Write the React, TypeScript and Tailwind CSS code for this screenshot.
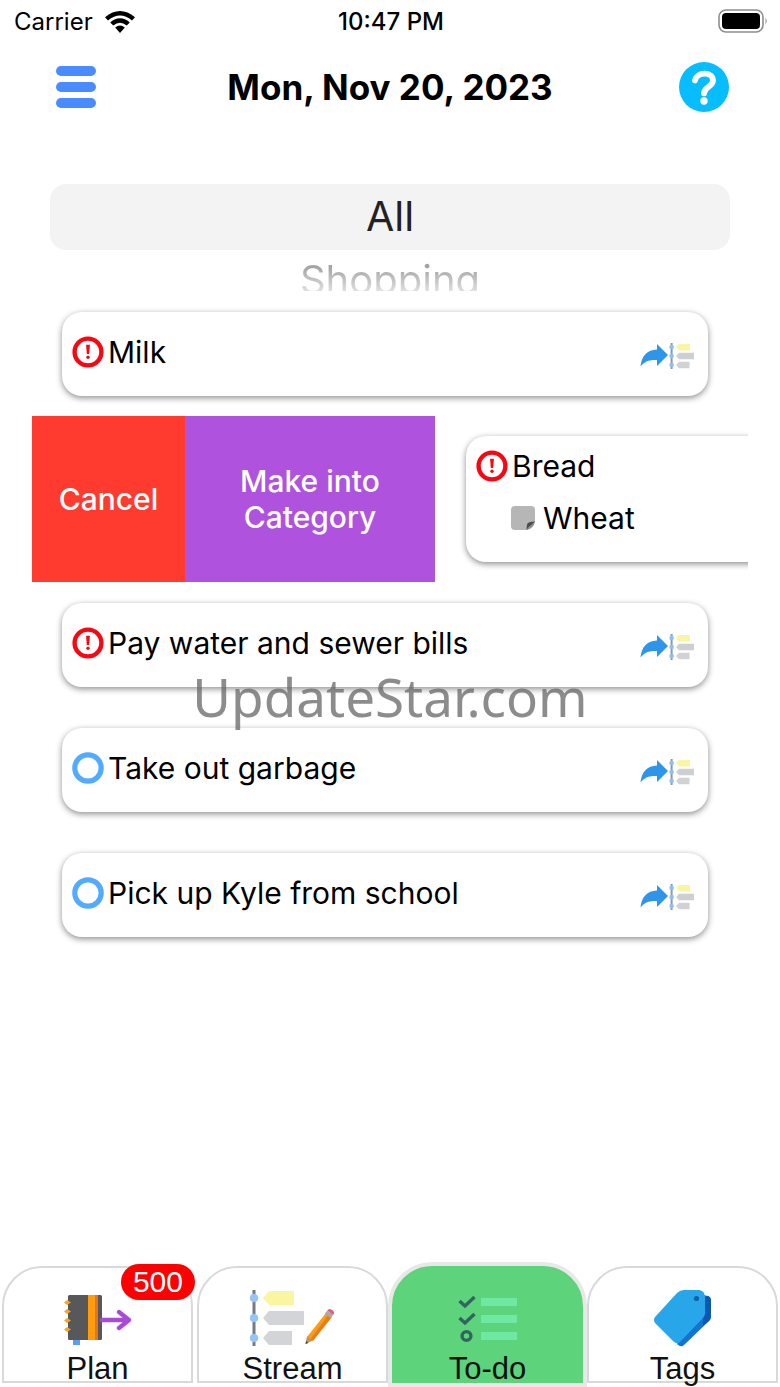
import React from 'react';

type Task = {
  title: string;
  urgent: boolean;
};

const firstTask: Task = { title: 'Milk', urgent: true };

const laterTasks: Task[] = [
  { title: 'Pay water and sewer bills', urgent: true },
  { title: 'Take out garbage', urgent: false },
  { title: 'Pick up Kyle from school', urgent: false },
];

const WifiIcon: React.FC = () => (
  <svg width="30" height="22" viewBox="0 0 30 22" aria-hidden="true">
    <path d="M0 6.2 Q15 -6.2 30 6.2 L27 9.4 Q15 -0.6 3 9.4 Z" />
    <path d="M5.2 11.4 Q15 3 24.8 11.4 L21.7 14.6 Q15 8.8 8.3 14.6 Z" />
    <path d="M10.2 16.6 Q15 12.6 19.8 16.6 L15 22 Z" />
  </svg>
);

const BatteryIcon: React.FC = () => (
  <svg width="50" height="24" viewBox="0 0 50 24" aria-hidden="true">
    <rect x="1" y="1" width="44" height="22" rx="7" fill="none" stroke="#8e8e8e" strokeWidth="1.6" />
    <rect x="4" y="4" width="38" height="16" rx="4" />
    <path d="M47.5 8.5 Q50 12 47.5 15.5 Z" fill="#9a9a9a" />
  </svg>
);

const MenuIcon: React.FC = () => (
  <svg width="40" height="44" viewBox="0 0 40 44" fill="#4a8cff" aria-hidden="true">
    <rect y="1" width="40" height="10" rx="5" />
    <rect y="17" width="40" height="10" rx="5" />
    <rect y="33" width="40" height="10" rx="5" />
  </svg>
);

const HelpIcon: React.FC = () => (
  <svg width="50" height="50" viewBox="0 0 50 50" aria-hidden="true">
    <circle cx="25" cy="25" r="25" fill="#05bdff" />
    <path
      d="M16 18.5 C17.5 9.5 34 9 34 18.6 C34 25 25 24.8 25 31.4"
      fill="none"
      stroke="#fff"
      strokeWidth="5.8"
      strokeLinecap="round"
    />
    <circle cx="25" cy="39" r="3.7" fill="#fff" />
  </svg>
);

const StatusIcon: React.FC<{ urgent: boolean }> = ({ urgent }) =>
  urgent ? (
    <svg width="32" height="32" viewBox="0 0 32 32" aria-hidden="true">
      <circle cx="16" cy="16" r="13.4" fill="none" stroke="#fa0512" strokeWidth="4.4" />
      <path d="M14.1 8.8 H17.9 L17.2 18 H14.8 Z" fill="#fa0512" />
      <circle cx="16" cy="21.2" r="1.7" fill="#fa0512" />
    </svg>
  ) : (
    <svg width="32" height="32" viewBox="0 0 32 32" aria-hidden="true">
      <circle cx="16" cy="16" r="13.2" fill="none" stroke="#52abff" strokeWidth="5.2" />
    </svg>
  );

const MoveIcon: React.FC = () => (
  <svg width="54" height="28" viewBox="0 0 54 28" aria-hidden="true">
    <path d="M17 2 L28 13 L17 24 V18 C9 17.6 4.5 19.5 0.5 24.5 C1.5 14 7 8 17 7.6 Z" fill="#2f95ea" />
    <path d="M31.6 1 V27" stroke="#8c97a8" strokeWidth="2" />
    <g fill="#8fbdf5">
      <circle cx="31.6" cy="5" r="2.3" />
      <circle cx="31.6" cy="14" r="2.3" />
      <circle cx="31.6" cy="23" r="2.3" />
    </g>
    <path d="M36 5 L39 2 H50 V8.4 H39 Z" fill="#f9f5a2" />
    <path d="M36 14 L39 10.8 H54 V17.2 H39 Z" fill="#cdd0d2" />
    <path d="M36 23 L39 19.8 H49.5 V26.2 H39 Z" fill="#d0d2d4" />
  </svg>
);

const NoteIcon: React.FC = () => (
  <svg width="24" height="24" viewBox="0 0 24 24" aria-hidden="true">
    <path d="M4 0 H20 Q24 0 24 4 V16 L16 24 H4 Q0 24 0 20 V4 Q0 0 4 0 Z" fill="#b7b6b7" />
    <path d="M24 15.4 Q17 15.6 16.2 18 Q15.6 20 15.6 24 Z" fill="#4c4b4c" />
    <path d="M24 16 Q22.5 22.5 15.6 24 L17.5 21 Z" fill="#8d8c8d" />
  </svg>
);

const PlanIcon: React.FC = () => (
  <svg width="68" height="60" viewBox="0 0 68 60" aria-hidden="true">
    <rect x="9" y="48" width="7" height="7" fill="#5b9df0" />
    <rect x="4" y="5" width="34" height="45" rx="1.5" fill="#56585a" />
    <rect x="24" y="5" width="10" height="45" fill="#ff9c0e" />
    <rect x="31" y="5" width="3" height="45" fill="#e5751b" />
    <g fill="#f8a428">
      <path d="M0 12.5 L3 10 L7 12.5 L3 15 Z" />
      <path d="M0 21.5 L3 19 L7 21.5 L3 24 Z" />
      <path d="M0 30.5 L3 28 L7 30.5 L3 33 Z" />
      <path d="M0 39.5 L3 37 L7 39.5 L3 42 Z" />
    </g>
    <path
      d="M38 30 H64 M55 22 L65 30 L55 38"
      fill="none"
      stroke="#a94bd6"
      strokeWidth="4.4"
      strokeLinecap="round"
      strokeLinejoin="round"
    />
  </svg>
);

const StreamIcon: React.FC = () => (
  <svg width="86" height="60" viewBox="2 0 86 60" aria-hidden="true">
    <path d="M6 0 V56" stroke="#777b80" strokeWidth="3" />
    <g fill="#93c5f8">
      <circle cx="6" cy="8" r="4.3" />
      <circle cx="6" cy="28" r="4.3" />
      <circle cx="6" cy="48" r="4.3" />
    </g>
    <path d="M15 8 L21 1 H46 V15 H21 Z" fill="#faf5a0" />
    <path d="M15 28 L21 21 H56 V35 H21 Z" fill="#d2d4d7" />
    <path d="M15 48 L21 41 H44 V55 H21 Z" fill="#d2d4d7" />
    <path d="M78 23 L83 27 L64 51 L59 47 Z" fill="#fb9d18" />
    <path d="M81 24 L84 27 L65 51 L62.5 49 Z" fill="#e58112" />
    <path d="M59 46 L64.5 50.5 L57.5 54 Z" fill="#c49554" />
    <path d="M58.2 51 L60.5 53 L57.5 54 Z" fill="#49433c" />
    <path d="M77 23.5 L79.3 20.5 L85 25 L82.5 28 Z" fill="#a3abad" />
    <path d="M79.3 20.5 Q81 17.5 85 20.5 Q87 23 85 25 Z" fill="#e0607b" />
  </svg>
);

const TodoIcon: React.FC = () => (
  <svg width="60" height="60" viewBox="0 0 60 60" aria-hidden="true">
    <g fill="none" stroke="#34645f" strokeWidth="3.4">
      <path d="M1.5 11 L7 16 L16.5 7" />
      <path d="M1.5 28 L7 33 L16.5 24" />
      <circle cx="8.5" cy="46" r="4.4" />
    </g>
    <g fill="#70e8a4">
      <rect x="23" y="8" width="36" height="8" />
      <rect x="23" y="25" width="36" height="8" />
      <rect x="23" y="42" width="36" height="8" />
    </g>
  </svg>
);

const TagIcon: React.FC = () => (
  <svg width="60" height="60" viewBox="0 0 60 60" aria-hidden="true">
    <path d="M46 4 L55 6 Q58 7 58 11 V26 Q58 29 56 31 L31 55 Q28 58 24 54 Z" fill="#1273d2" />
    <path d="M52 7 L55 6 Q58 7 58 11 V26 Q58 29 56 31 L50 36 L50 27 Z" fill="#0b58b4" />
    <path
      d="M24 3 Q27 0 31 0 H46 Q52 1 52 7 V23 Q52 26 50 28 L27 52 Q24 55 20 51 L2 33 Q0 30 2 27 Z"
      fill="#27a6ea"
    />
    <circle cx="43.5" cy="8.5" r="2.6" fill="#10609f" />
  </svg>
);

type Tab = {
  label: string;
  icon: React.FC;
  active?: boolean;
  badge?: string;
};

const tabs: Tab[] = [
  { label: 'Plan', icon: PlanIcon, badge: '500' },
  { label: 'Stream', icon: StreamIcon },
  { label: 'To-do', icon: TodoIcon, active: true },
  { label: 'Tags', icon: TagIcon },
];

const cardShadow = 'shadow-[0_2px_6px_rgba(0,0,0,0.45)]';

const TaskRow: React.FC<{ task: Task }> = ({ task }) => (
  <li className="pt-[21px] pb-5 pl-[30px] pr-10">
    <div className={`flex h-[84px] items-center rounded-[20px] bg-white pb-1 pl-2.5 pr-3.5 ${cardShadow}`}>
      <button type="button" aria-label={`Complete ${task.title}`} className="mr-1 shrink-0">
        <StatusIcon urgent={task.urgent} />
      </button>
      <span className="flex-1 text-[30px] leading-9">{task.title}</span>
      <button type="button" aria-label={`Move ${task.title} to stream`} className="mt-2 shrink-0">
        <MoveIcon />
      </button>
    </div>
  </li>
);

const App: React.FC = () => {
  return (
    <div className="flex min-h-screen flex-col bg-white font-['Inter','Liberation_Sans',sans-serif] text-black">
      <div className="grid h-11 grid-cols-3 items-center pl-3.5 pr-3 text-[24px]">
        <div className="flex items-center gap-3">
          <span>Carrier</span>
          <WifiIcon />
        </div>
        <span className="text-center font-medium">10:47 PM</span>
        <div className="flex justify-end pb-0.5">
          <BatteryIcon />
        </div>
      </div>

      <header className="flex h-[86px] items-center justify-between px-[51px]">
        <button type="button" aria-label="Menu" className="flex w-[50px] justify-center">
          <MenuIcon />
        </button>
        <h1 className="text-[35px] font-bold">Mon, Nov 20, 2023</h1>
        <button type="button" aria-label="Help">
          <HelpIcon />
        </button>
      </header>

      <div className="mt-[54px] flex h-[107px] flex-col overflow-hidden px-[50px]">
        <button type="button" className="h-[66px] shrink-0 rounded-2xl bg-[#f3f3f4] text-[41px] text-[#222]">
          All
        </button>
        <button
          type="button"
          className="mt-1.5 shrink-0 bg-linear-to-b from-[#8c8c8c] to-white bg-clip-text text-[40px] leading-12 text-transparent"
        >
          Shopping
        </button>
      </div>

      <main className="relative px-8">
        <ul>
          <TaskRow task={firstTask} />
          <li className="flex h-[166px] overflow-hidden">
            <button type="button" className="w-[153px] shrink-0 bg-[#ff3b30] text-[30px] font-medium text-white">
              Cancel
            </button>
            <button
              type="button"
              className="w-[250px] shrink-0 bg-[#af52de] px-10 text-[30px] leading-9 font-medium text-white"
            >
              Make into Category
            </button>
            <div className={`my-5 -mr-10 ml-[31px] flex-1 rounded-[20px] bg-white pl-2.5 pt-3 ${cardShadow}`}>
              <div className="flex items-center gap-1">
                <button type="button" aria-label="Complete Bread" className="shrink-0">
                  <StatusIcon urgent />
                </button>
                <span className="text-[30px] leading-9">Bread</span>
              </div>
              <div className="mt-4 flex items-center gap-2 pl-[35px]">
                <NoteIcon />
                <span className="text-[30px] leading-9">Wheat</span>
              </div>
            </div>
          </li>
          {laterTasks.map((task) => (
            <TaskRow key={task.title} task={task} />
          ))}
        </ul>
        <p className="pointer-events-none absolute inset-x-0 top-[370px] text-center font-['Noto_Sans','Open_Sans',sans-serif] text-[53px] leading-[72px] text-[#666]/75">
          UpdateStar.com
        </p>
      </main>

      <nav className="mt-auto grid grid-cols-4 gap-1 px-0.5 pb-1" aria-label="Sections">
        {tabs.map((tab) => {
          const Icon = tab.icon;
          return (
            <a
              key={tab.label}
              href={`#${tab.label.toLowerCase()}`}
              aria-current={tab.active ? 'page' : undefined}
              className={`relative flex h-[117px] flex-col items-center rounded-t-[40px] border-2 pt-[22px] font-['Liberation_Sans',sans-serif] text-[31px] text-[#111] ${
                tab.active ? 'border-[#5dd37b] bg-[#5dd37b] shadow-[0_0_0_4px_#e8e8e8]' : 'border-[#d9d9d9] bg-white'
              }`}
            >
              <span className="h-[60px] shrink-0">
                <Icon />
              </span>
              <span className="leading-[38px]">{tab.label}</span>
              {tab.badge && (
                <span className="absolute -right-1 -top-1 rounded-full bg-[#fe0000] px-3 text-[30px] leading-9 text-white">
                  {tab.badge}
                </span>
              )}
            </a>
          );
        })}
      </nav>
    </div>
  );
};

export default App;
